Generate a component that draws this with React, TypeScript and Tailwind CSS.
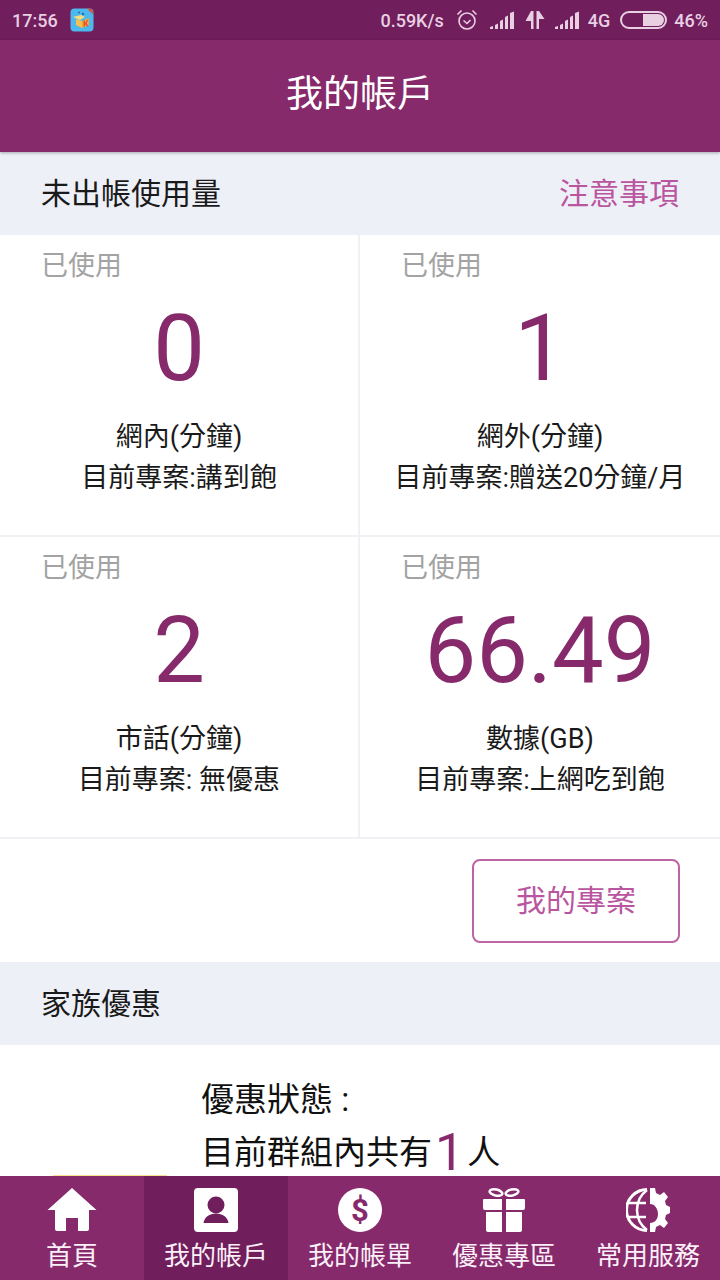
const FONT = "font-['Roboto','Noto_Sans_CJK_TC','Noto_Sans_CJK_SC',sans-serif]";

type Usage = { value: string; name: string; plan: string };

const USAGE: Usage[] = [
  { value: "0", name: "網內(分鐘)", plan: "目前專案:講到飽" },
  { value: "1", name: "網外(分鐘)", plan: "目前專案:贈送20分鐘/月" },
  { value: "2", name: "市話(分鐘)", plan: "目前專案: 無優惠" },
  { value: "66.49", name: "數據(GB)", plan: "目前專案:上網吃到飽" },
];

function Signal() {
  return (
    <svg width="25" height="18" viewBox="0 0 25 18" fill="#e8cfe2">
      <path d="M0 18v-2l3-1v3zM5 18v-4l3-1.500V18zM10 18V10l3-1.500V18zM15 18V6l3-1.500V18zM20 18V2l4-1.500V18z" />
    </svg>
  );
}

function StatusBar() {
  return (
    <div className="flex h-10 items-center bg-[#701e5c] pl-3 pr-3 text-[18px] font-medium text-[#e8cfe2]">
      <span>17:56</span>
      <svg className="ml-[12px]" width="24" height="24" viewBox="0 0 24 24">
        <rect width="23" height="23" y="0.500" x="0.500" rx="4" fill="#4db8ee" />
        <path d="M17 0.500h2a4 4 0 0 1 4 4v2z" fill="#d9533b" />
        <path d="M3 9l8-2 4 2-5 3z" fill="#f7dc7a" />
        <path d="M6 11l6 2v7l-6-3z" fill="#f2c14e" />
        <path d="M12 13l7-3v7l-7 3z" fill="#f0a63a" />
        <path d="M13.500 12.500h1.500v2.500l2-3h1.500l-2 3 2 3.500h-1.500l-2-2.500v2.500h-1.500z" fill="#e8552f" />
        <circle cx="13" cy="6" r="1.200" fill="#1f6fa8" />
        <circle cx="9" cy="4.500" r="1" fill="#1f6fa8" />
      </svg>
      <span className="ml-auto">0.59K/s</span>
      <svg className="ml-[12px]" width="22" height="22" viewBox="0 0 22 22" fill="none" stroke="#e8cfe2" strokeWidth="1.600">
        <circle cx="11" cy="12" r="8" />
        <path d="M7.500 11.500l3.500 3 3.500-3.500M1.500 5.500l4-4M20.500 5.500l-4-4" />
      </svg>
      <span className="ml-[12px] flex"><Signal /></span>
      <svg className="ml-[10px]" width="20" height="18" viewBox="0 0 20 18" fill="#e8cfe2">
        <path d="M6 0h2.500v18H6v-8H0.500zM11.500 0v18H14V8h5.500L14 0z" />
      </svg>
      <span className="ml-[10px] flex"><Signal /></span>
      <span className="ml-[8px]">4G</span>
      <div className="ml-[10px] flex h-[18px] w-[47px] justify-end rounded-full border-2 border-[#e8cfe2] pr-[1px] py-[1px]">
        <div className="w-[21px] rounded-r-full bg-[#e8cfe2]" />
      </div>
      <span className="ml-[7px]">46%</span>
    </div>
  );
}

function Cell({ value, name, plan }: Usage) {
  return (
    <div className="flex h-[300px] flex-col bg-white">
      <p className="ml-[41px] mt-[12px] text-[27px] leading-[38px] text-[#a3a3a3]">已使用</p>
      <p className="mt-[10px] text-center text-[92px] leading-[108px] text-[#862a6c]">{value}</p>
      <p className="mt-[14px] text-center text-[27px] leading-[40px] text-[#1a1a1a]">{name}</p>
      <p className="whitespace-nowrap text-center text-[27px] leading-[42px] text-[#1a1a1a]">{plan}</p>
    </div>
  );
}

function HomeIcon() {
  return (
    <svg width="50" height="44" viewBox="0 0 50 44" fill="#fff">
      <path d="M25 0L49.500 22H42v19a2 2 0 0 1-2 2H31V30h-12v13H10a2 2 0 0 1-2-2V22H0.500z" />
    </svg>
  );
}

function AccountIcon() {
  return (
    <svg width="44" height="44" viewBox="0 0 44 44">
      <rect width="44" height="44" rx="4" fill="#fff" />
      <circle cx="22" cy="17" r="8.500" fill="#701e5c" />
      <path d="M9.500 35c1-6 6-9.500 12.500-9.500S33.500 29 34.500 35z" fill="#701e5c" />
    </svg>
  );
}

function BillIcon() {
  return (
    <svg width="44" height="44" viewBox="0 0 44 44">
      <circle cx="22" cy="22" r="22" fill="#fff" />
      <text x="22" y="33" textAnchor="middle" fontSize="31" fontWeight="700" fontFamily="Roboto, sans-serif" fill="#862a6c">$</text>
    </svg>
  );
}

function GiftIcon() {
  return (
    <svg width="44" height="44" viewBox="0 0 44 44" fill="#fff">
      <path d="M2 11h18v11H3a2 2 0 0 1-2-2v-8a1 1 0 0 1 1-1zM24 11h18a1 1 0 0 1 1 1v8a2 2 0 0 1-2 2H24zM4 24h16v20H6a2 2 0 0 1-2-2zM24 24h16v18a2 2 0 0 1-2 2H24z" />
      <ellipse cx="14" cy="4.500" rx="6.500" ry="3" fill="none" stroke="#fff" strokeWidth="2.500" transform="rotate(12 14 4.500)" />
      <ellipse cx="30" cy="4.500" rx="6.500" ry="3" fill="none" stroke="#fff" strokeWidth="2.500" transform="rotate(-12 30 4.500)" />
    </svg>
  );
}

function ServiceIcon() {
  return (
    <svg width="44" height="44" viewBox="0 0 44 44" fill="none">
      <path d="M21 1.500a20.500 20.500 0 0 0 0 41" stroke="#fff" strokeWidth="3" />
      <path d="M21 2C13 8 11 15 11 22s2 14 10 20M3 15h17M3 29h17" stroke="#fff" strokeWidth="2.500" />
      <path d="M24 0h5l1 5 4 2 4-3 4 5-3 4 1 4 4 2v6l-4 2-1 4 3 4-4 5-4-3-4 2-1 5h-5v-9c5 0 8-4 8-9s-3-10-8-10z" fill="#fff" />
    </svg>
  );
}

const TABS = [
  { label: "首頁", icon: <HomeIcon /> },
  { label: "我的帳戶", icon: <AccountIcon />, active: true },
  { label: "我的帳單", icon: <BillIcon /> },
  { label: "優惠專區", icon: <GiftIcon /> },
  { label: "常用服務", icon: <ServiceIcon /> },
];

export default function App() {
  return (
    <div className={`flex h-[1280px] w-[720px] flex-col overflow-hidden bg-white ${FONT}`}>
      <StatusBar />
      <header className="relative z-10 flex h-[112px] items-center justify-center bg-[#862a6c] pb-[2px] text-[37px] text-white shadow-[0_1px_3px_rgba(0,0,0,0.3)]">
        我的帳戶
      </header>

      <main className="min-h-0 flex-1 overflow-hidden">
        <div className="flex h-[83px] items-center justify-between bg-[#eef0f7] pl-[41px] pr-[41px] text-[30px]">
          <span className="text-[#1a1a1a]">未出帳使用量</span>
          <span className="text-[#b9569f]">注意事項</span>
        </div>

        <div className="grid grid-cols-[358px_360px] gap-[2px] border-b-2 border-[#f0f0f5] bg-[#f0f0f5]">
          {USAGE.map((u) => (
            <Cell key={u.name} {...u} />
          ))}
        </div>

        <div className="flex h-[123px] items-center justify-end pr-[40px]">
          <button className="h-[84px] w-[208px] rounded-[8px] border-2 border-[#bd64a5] text-[30px] text-[#b9569f]">
            我的專案
          </button>
        </div>

        <div className="flex h-[83px] items-center bg-[#eef0f7] pl-[41px] text-[30px] text-[#1a1a1a]">
          家族優惠
        </div>

        <div className="flex">
          <div className="ml-[53px] mt-[130px] h-[2px] w-[114px] bg-[#fbdf8c]" />
          <div className="ml-[34px] pt-[30px] text-[33px] text-[#111]">
            <p className="leading-[50px]">優惠狀態 :</p>
            <p className="flex items-end leading-[56px]">
              目前群組內共有
              <span className="mx-[3px] text-[52px] leading-[56px] text-[#862a6c]">1</span>
              人
            </p>
          </div>
        </div>
      </main>

      <nav className="grid h-[104px] grid-cols-5 bg-[#862a6c] text-[26px] text-[#fbeff8]">
        {TABS.map((t) => (
          <div
            key={t.label}
            className={`flex flex-col items-center pt-[12px] ${t.active ? "bg-[#701e5c]" : ""}`}
          >
            <div className="flex h-[44px] items-center">{t.icon}</div>
            <span className="mt-[6px] leading-[36px]">{t.label}</span>
          </div>
        ))}
      </nav>
    </div>
  );
}
